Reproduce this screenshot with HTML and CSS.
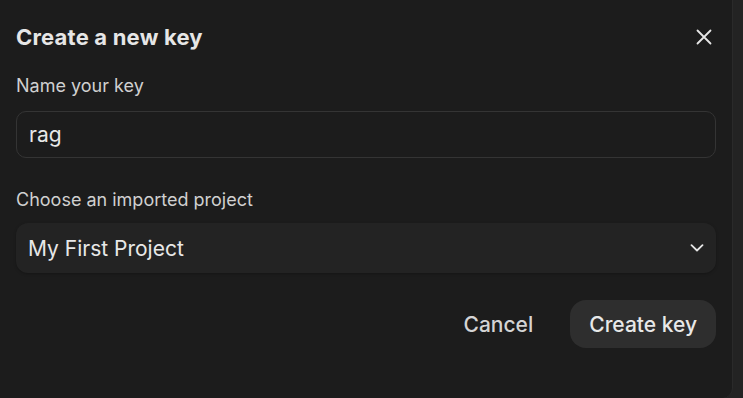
FILE: index.html
```html
<!DOCTYPE html>
<html>
<head>
<meta charset="utf-8">
<link rel="stylesheet" href="styles.css">
</head>
<body>
<div class="dialog">
  <div class="header">
    <h1 class="title">Create a new key</h1>
    <button class="close" aria-label="Close">
      <svg width="16" height="16" viewBox="0 0 16 16"><path d="M1.5 1.5L14.5 14.5M14.5 1.5L1.5 14.5" stroke="#e6e6e6" stroke-width="1.8" stroke-linecap="round"/></svg>
    </button>
  </div>
  <label class="label">Name your key</label>
  <div class="input">rag</div>
  <label class="label label-2">Choose an imported project</label>
  <div class="select">
    <span>My First Project</span>
    <svg width="14" height="8" viewBox="0 0 14 8"><path d="M1.5 1.2L7 6.5L12.5 1.2" fill="none" stroke="#e6e6e6" stroke-width="1.8" stroke-linecap="round" stroke-linejoin="round"/></svg>
  </div>
  <div class="actions">
    <button class="btn btn-ghost">Cancel</button>
    <button class="btn btn-primary">Create key</button>
  </div>
</div>
</body>
</html>
```
FILE: styles.css
```css
* { box-sizing: border-box; }
html, body { margin: 0; height: 100%; }
body {
  background: #232323;
  font-family: Inter, "Noto Sans", sans-serif;
  color: #e6e6e6;
}
.dialog {
  width: 733px;
  height: 398px;
  background: #1c1c1c;
  border-right: 1px solid #2a2a2a;
  border-bottom-right-radius: 10px;
  padding: 16px 16px 0 16px;
  display: flex;
  flex-direction: column;
}
.header {
  display: flex;
  align-items: center;
  justify-content: space-between;
  height: 42px;
}
.title {
  margin: 0;
  font-size: 22px;
  font-weight: 650;
  letter-spacing: 0.2px;
  color: #e6e6e6;
}
.close {
  background: none;
  border: 0;
  padding: 0;
  margin-right: 4px;
  width: 16px;
  height: 16px;
  display: flex;
}
.label {
  margin-top: 17px;
  font-size: 18px;
  color: #d0d0d0;
  line-height: 22px;
}
.label-2 { margin-top: 31px; }
.input {
  margin-top: 14px;
  height: 47px;
  border: 1px solid #343434;
  border-radius: 10px;
  padding: 0 12px;
  display: flex;
  align-items: center;
  font-size: 21px;
  color: #e8e8e8;
}
.select {
  margin-top: 12px;
  height: 50px;
  background: #232323;
  border-radius: 12px;
  padding: 0 12px;
  display: flex;
  align-items: center;
  justify-content: space-between;
  font-size: 21px;
  color: #e8e8e8;
  box-shadow: 0 1px 3px rgba(0,0,0,0.25);
}
.select svg { margin-right: 0; }
.actions {
  margin-top: 27px;
  display: flex;
  justify-content: flex-end;
  gap: 20px;
}
.btn {
  font-family: inherit;
  font-size: 21px;
  font-weight: 500;
  height: 48px;
  padding: 0 19px;
  border: 0;
  border-radius: 16px;
  color: #e8e8e8;
  background: none;
}
.btn-ghost { color: #d4d4d4; padding: 0 17px; }
.btn-primary { background: #2e2e2e; }
```
